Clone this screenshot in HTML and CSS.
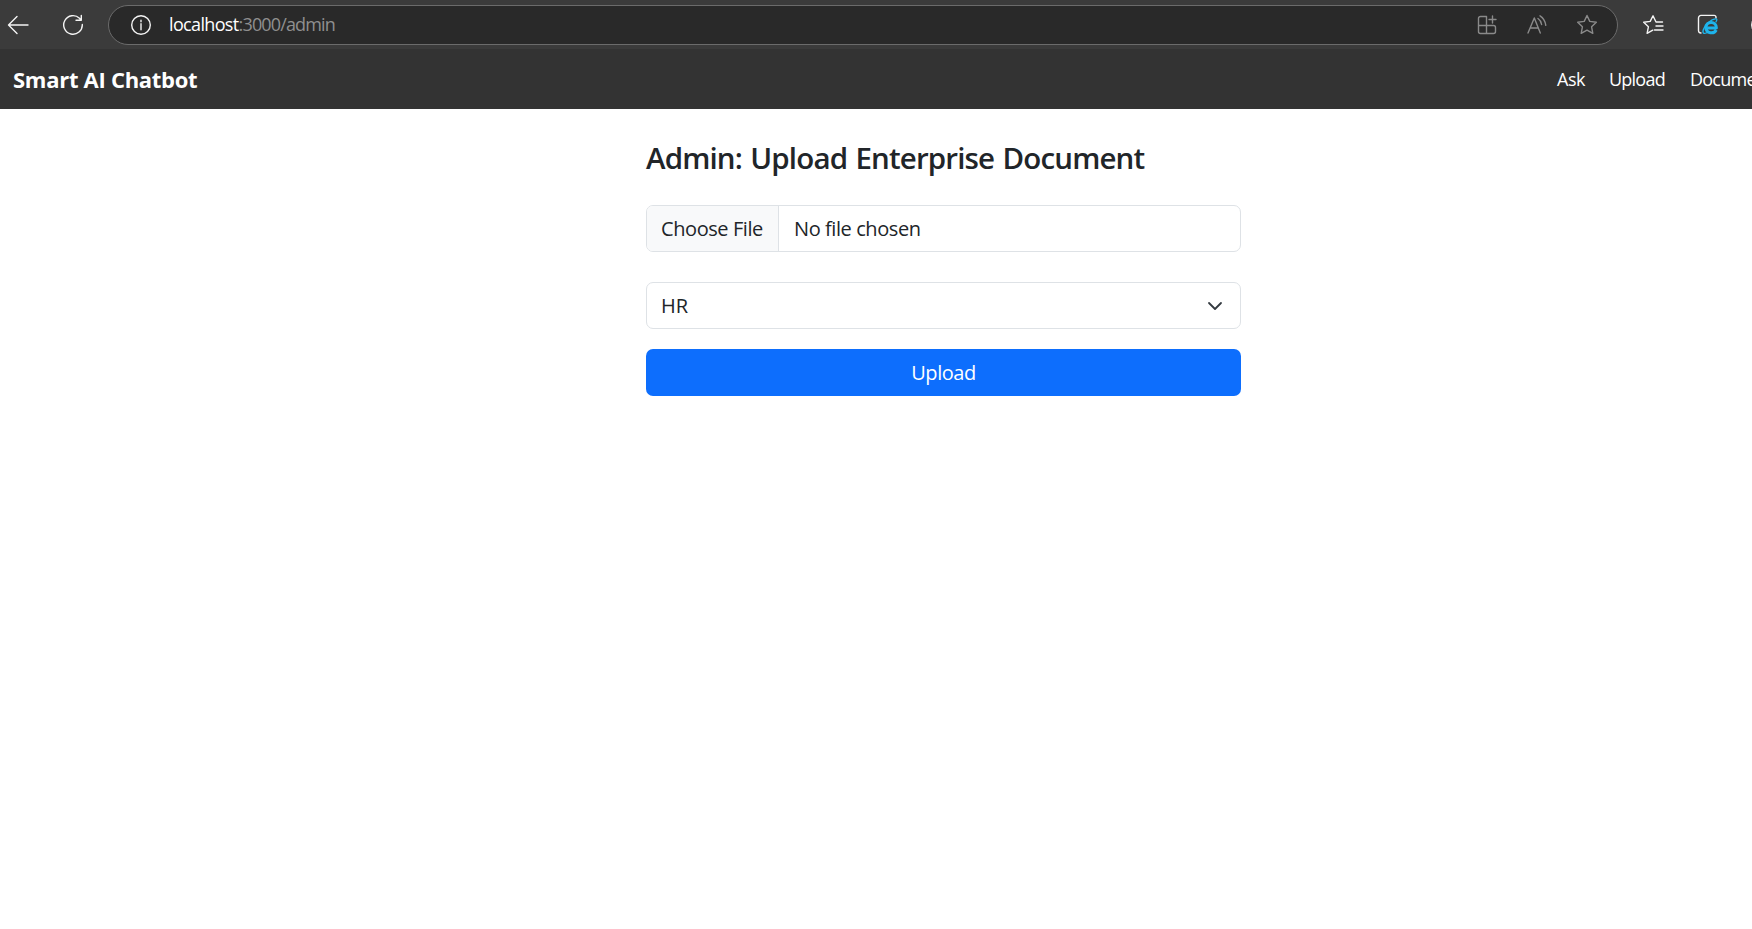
FILE: index.html
```html
<!DOCTYPE html>
<html lang="en">
<head>
<meta charset="utf-8">
<title>Smart AI Chatbot</title>
<link rel="stylesheet" href="styles.css">
</head>
<body>
<header class="browser">
  <svg class="icon back" width="22" height="20" viewBox="0 0 22 20"><path d="M21 10H2M10 1.5 1.5 10l8.500 8.500"/></svg>
  <svg class="icon reload" width="22" height="22" viewBox="0 0 22 22"><path d="M20.300 10.500A9.300 9.300 0 1 1 17.500 4.300L19 6M19.300 1.500V6.300H14"/></svg>
  <div class="address">
    <svg class="icon info" width="22" height="22" viewBox="0 0 22 22"><circle cx="11" cy="11" r="9.300"/><path d="M11 9.800v6M11 6.200v1.600"/></svg>
    <span class="url"><span class="host">localhost</span>:3000/admin</span>
    <div class="tools">
      <svg class="icon" width="20" height="20" viewBox="0 0 20 20"><path d="M9.500 1.500H3.500a2 2 0 0 0-2 2v13a2 2 0 0 0 2 2h13a2 2 0 0 0 2-2v-4a2 2 0 0 0-2-2H1.500M9.500 1.500v17M15.500 1v7M12 4.500h7"/></svg>
      <svg class="icon" width="20" height="20" viewBox="0 0 20 20"><path d="M1 18 7.300 3 13.300 18M3.200 13h8.200M11 3.500c2 1.300 3.200 3.300 3.600 6M13 .800c3.200 2 5.200 5 5.800 9.500"/></svg>
      <svg class="icon" width="22" height="21" viewBox="0 0 22 21"><path d="M11 1.500l2.800 5.900 6.500.900-4.700 4.500 1.200 6.500L11 16.200l-5.800 3.100 1.200-6.500L1.700 8.300l6.500-.900z"/></svg>
    </div>
  </div>
  <svg class="icon favorites" width="22" height="21" viewBox="0 0 22 21"><path d="M20.500 8H14L11 1.800 8.200 7.400l-6.500.900 4.700 4.500-1.300 6.500 5.700-3.100M14 12h7M12.500 16h8.500"/></svg>
  <svg class="icon ie" width="22" height="22" viewBox="0 0 22 22"><path d="M19 4V3.200A1.800 1.800 0 0 0 17.200 1.400H4a2.500 2.500 0 0 0-2.500 2.500v12.800A2.500 2.500 0 0 0 4 19"/><path class="ie-e" d="M19.200 16c-2 4.200-10.300 3.800-10.300-2.500 0-6.800 10.600-7 10.500.5H10.500"/><path class="ie-ring" d="M19 7.800c3.200-4.700-3-3.300-7.200.4-4.200 3.600-7 9.200-5.400 10.800.9.900 3 .2 5-1.200"/></svg>
  <span class="profile"></span>
</header>
<nav class="navbar">
  <a class="brand">Smart AI Chatbot</a>
  <div class="links"><a>Ask</a><a class="tight">Upload</a><a class="tight">Documents</a></div>
</nav>
<main class="panel">
  <h1 class="title">Admin: Upload Enterprise Document</h1>
  <div class="control file"><span class="file-button">Choose File</span><span class="file-name">No file chosen</span></div>
  <div class="control select"><span>HR</span><svg class="chevron" viewBox="0 0 16 16"><path d="m2 5 6 6 6-6"/></svg></div>
  <button class="submit">Upload</button>
</main>
</body>
</html>
```
FILE: styles.css
```css
* { box-sizing: border-box; }
body { margin: 0; height: 929px; overflow: hidden; background: #fff; color: #212529; font-family: "Open Sans", "Noto Sans", sans-serif; }
.browser { display: flex; align-items: center; height: 49px; padding-left: 7px; background: #3b3b3b; }
.icon { flex: none; display: block; fill: none; stroke: #f4f4f4; stroke-width: 1.4; stroke-linecap: round; stroke-linejoin: round; }
.reload { margin-left: 33px; }
.address { display: flex; align-items: center; flex: none; width: 1510px; height: 40px; margin-left: 24px; padding: 0 19px 0 21px; border: 1px solid #6b6b6b; border-radius: 20px; background: #292929; }
.url { margin-left: 17px; padding-bottom: 1px; color: #8f8f8f; font-size: 18px; line-height: 24px; letter-spacing: -0.85px; }
.host { color: #fff; letter-spacing: -0.65px; }
.tools { display: flex; align-items: center; gap: 30px; margin-left: auto; }
.tools .icon { stroke: #8a8a8a; }
.tools .icon:last-child { margin-left: -1px; }
.favorites { margin-left: 24px; }
.ie { margin-left: 33px; }
.ie .ie-e { stroke: #1eb4ec; stroke-width: 3; stroke-linecap: butt; }
.ie .ie-ring { stroke: #1eb4ec; stroke-width: 1.300; }
.profile { flex: none; width: 20px; height: 20px; margin-left: 32px; border: 1.500px solid #eee; border-radius: 50%; }
.navbar { display: flex; align-items: center; height: 60px; padding-left: 13px; background: #333; color: #fff; }
.brand { flex: none; font-size: 22px; line-height: 30px; font-weight: 700; letter-spacing: -0.28px; }
.links { display: flex; flex: none; width: 195px; margin-left: auto; gap: 24px; font-size: 18px; line-height: 24px; white-space: nowrap; letter-spacing: -0.5px; }
.tight { letter-spacing: -0.75px; }
.tight:last-child { margin-left: 1px; }
.panel { width: 595px; margin-left: 646px; padding-top: 29px; }
.title { margin: 0 0 27px; font-size: 29.500px; line-height: 40px; font-weight: 580; letter-spacing: -0.85px; word-spacing: 1.500px; white-space: nowrap; }
.control { display: flex; align-items: center; height: 47px; border: 1px solid #dee2e6; border-radius: 7px; background: #fff; font-size: 20px; line-height: 30px; letter-spacing: -0.42px; overflow: hidden; }
.file-button { display: flex; align-items: center; flex: none; width: 132px; height: 100%; padding-left: 14px; border-right: 1px solid #dee2e6; background: #f8f9fa; }
.file-name { margin-left: 15px; }
.select { justify-content: space-between; margin-top: 30px; padding: 0 15px 0 14px; letter-spacing: 0; }
.chevron { display: block; width: 16px; height: 16px; margin-right: 2px; fill: none; stroke: #343a40; stroke-width: 1.8; stroke-linecap: round; stroke-linejoin: round; }
.submit { display: block; width: 100%; height: 47px; margin-top: 20px; padding: 0; border: 0; border-radius: 7px; background: #0d6efd; color: #fff; font: 400 20px/30px "Open Sans", "Noto Sans", sans-serif; letter-spacing: -0.45px; }
```
